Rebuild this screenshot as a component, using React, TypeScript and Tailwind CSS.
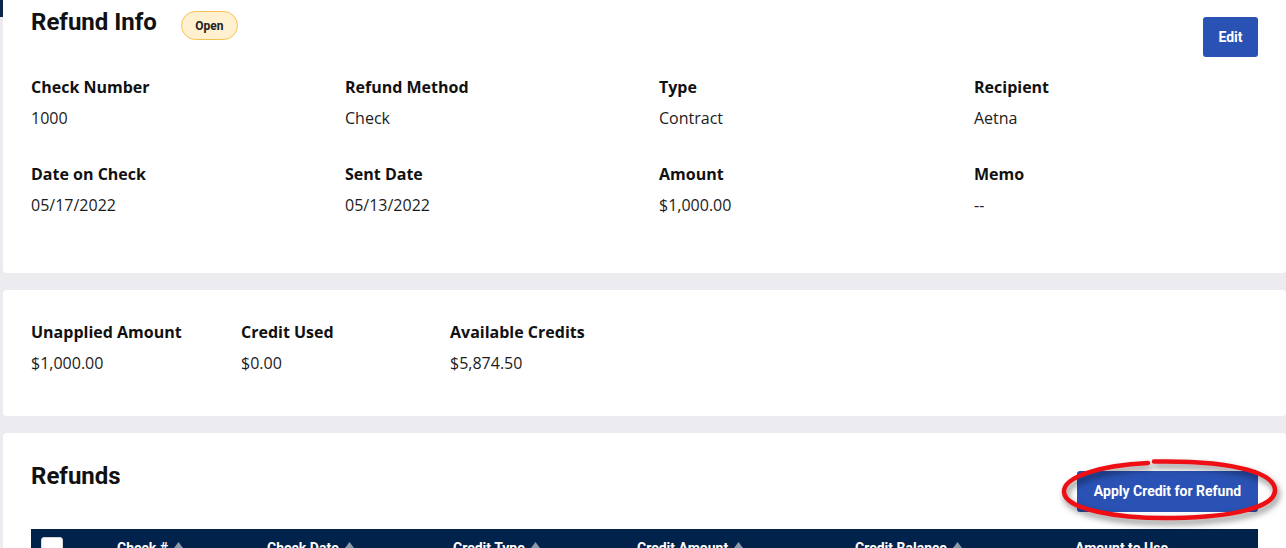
import React from 'react'

const INFO = [
  { label: 'Check Number', value: '1000' },
  { label: 'Refund Method', value: 'Check' },
  { label: 'Type', value: 'Contract' },
  { label: 'Recipient', value: 'Aetna' },
  { label: 'Date on Check', value: '05/17/2022' },
  { label: 'Sent Date', value: '05/13/2022' },
  { label: 'Amount', value: '$1,000.00' },
  { label: 'Memo', value: '--' },
]

const TOTALS = [
  { label: 'Unapplied Amount', value: '$1,000.00' },
  { label: 'Credit Used', value: '$0.00' },
  { label: 'Available Credits', value: '$5,874.50' },
]

const COLUMNS = [
  { name: 'Check #', sort: true },
  { name: 'Check Date', sort: true },
  { name: 'Credit Type', sort: true },
  { name: 'Credit Amount', sort: true },
  { name: 'Credit Balance', sort: true },
  { name: 'Amount to Use', sort: false },
]

function Field({ label, value }: { label: string; value: string }) {
  return (
    <div className="font-['Open_Sans',sans-serif] text-[16px] leading-6">
      <div className="font-bold text-[#111]">{label}</div>
      <div className="mt-[7px] text-[#1c1c1c]">{value}</div>
    </div>
  )
}

function SortArrow() {
  return (
    <svg width="9" height="6" viewBox="0 0 9 6" className="mb-[6px] ml-[6px] inline-block">
      <path d="M4.5 0 L9 6 L0 6 Z" fill="#8d97a8" />
    </svg>
  )
}

export default function App() {
  return (
    <div className="flex h-[548px] w-[1286px] overflow-hidden bg-[#ececf0] font-['Roboto',sans-serif]">
      {/* sidebar edge */}
      <div className="w-[3px] shrink-0">
        <div className="h-[17px] bg-[#0c2548]" />
      </div>

      <div className="flex flex-1 flex-col gap-[17px]">
        {/* Refund info */}
        <div className="rounded-b bg-white px-7 pt-[6px] pb-[56px]">
          <div className="flex items-start">
            <h1 className="text-[24px] font-bold leading-8 text-[#111]">Refund Info</h1>
            <span className="ml-[24px] mt-[5px] flex h-[29px] w-[57px] items-center justify-center rounded-full border border-[#f5c24e] bg-[#fff1cf] text-[12px] font-bold text-[#222]">
              Open
            </span>
            <button className="ml-auto mt-[11px] h-10 w-[55px] rounded-[3px] bg-[#2a52b4] text-[14px] font-bold text-white">
              Edit
            </button>
          </div>
          <div className="mt-[18px] grid grid-cols-[314px_314px_315px_1fr] gap-y-[32px]">
            {INFO.map(f => <Field key={f.label} {...f} />)}
          </div>
        </div>

        {/* Totals */}
        <div className="rounded bg-white px-7 pt-[30px] pb-[41px]">
          <div className="grid grid-cols-[210px_209px_210px]">
            {TOTALS.map(f => <Field key={f.label} {...f} />)}
          </div>
        </div>

        {/* Refunds */}
        <div className="relative flex-1 rounded-t bg-white px-7 pt-[27px]">
          <div className="flex items-start">
            <h2 className="text-[24px] font-bold leading-8 text-[#111]">Refunds</h2>
            <button className="ml-auto mt-[11px] h-[41px] w-[181px] rounded-[3px] bg-[#2a52b4] text-[14px] font-bold text-white">
              Apply Credit for Refund
            </button>
          </div>

          <div className="mt-[17px] grid grid-cols-[86px_150px_186px_184px_218px_220px_1fr] items-start bg-[#01224a] pt-2 pb-3 text-[14px] font-bold leading-5 text-white">
            <div className="pl-[10px]">
              <div className="h-[22px] w-[22px] rounded-[3px] border border-[#d6d6d6] bg-white" />
            </div>
            {COLUMNS.map(c => (
              <div key={c.name} className="flex items-center pt-[1px]">
                <span>{c.name}</span>
                {c.sort && <SortArrow />}
              </div>
            ))}
          </div>

          {/* hand-drawn highlight annotation */}
          <svg
            width="230"
            height="74"
            viewBox="0 0 230 74"
            className="pointer-events-none absolute left-[1053px] top-[22px] drop-shadow-[2px_4px_3px_rgba(0,0,0,0.5)]"
          >
            <path
              d="M92 8 C45 10 7 22 8 37 C9 54 60 64 118 63 C178 62 218 52 219 36 C220 20 184 5 98 6.5"
              fill="none"
              stroke="#ee0f14"
              strokeWidth="4.5"
              strokeLinecap="round"
            />
          </svg>
        </div>
      </div>
    </div>
  )
}
